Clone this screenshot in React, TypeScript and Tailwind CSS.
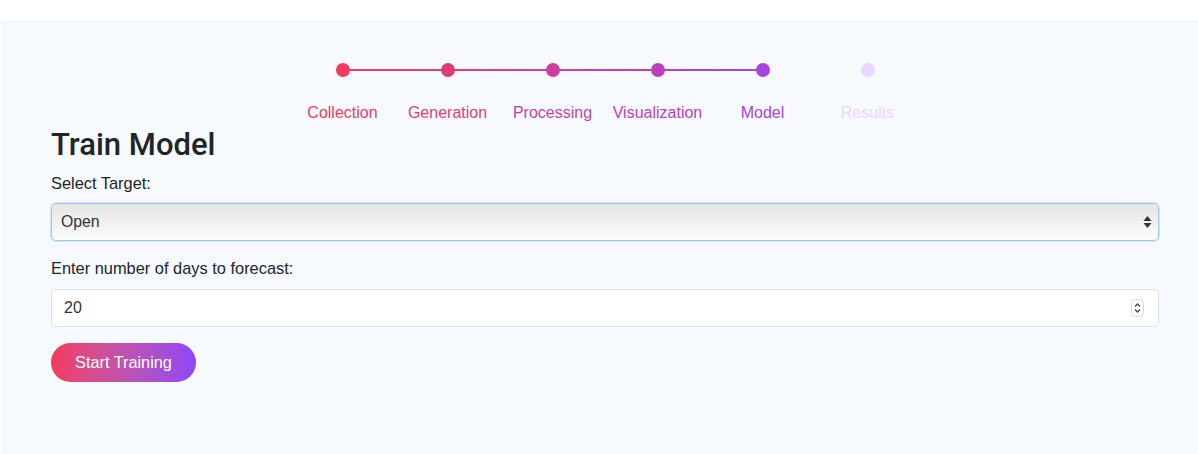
import React from "react";

const steps = [
  { label: "Collection", color: "#f23b5f" },
  { label: "Generation", color: "#df3d7a" },
  { label: "Processing", color: "#cc3fa0" },
  { label: "Visualization", color: "#b842bb" },
  { label: "Model", color: "#a443dd" },
  { label: "Results", color: "#ead6fd" },
];

export default function App() {
  return (
    <div className="min-h-[454px] bg-white pt-[20px]" style={{ fontFamily: '"Liberation Sans", Arial, sans-serif' }}>
      <div className="ml-[1px] min-h-[434px] bg-[#f6f9fd] pl-[50px] pr-[39px] pb-[40px]">
        <div className="flex justify-center pt-[43px]">
          {steps.map((s, i) => (
            <div key={s.label} className="relative flex w-[105px] flex-col items-center">
              {i < 4 && (
                <div
                  className="absolute left-1/2 top-[6px] h-[2px] w-[105px]"
                  style={{ background: `linear-gradient(to right, ${s.color}, ${steps[i + 1].color})` }}
                />
              )}
              <div className="relative z-10 h-[14px] w-[14px] rounded-full" style={{ backgroundColor: s.color }} />
              <div className="mt-[24px] text-[16px] leading-[24px] whitespace-nowrap" style={{ color: s.color }}>
                {s.label}
              </div>
            </div>
          ))}
        </div>
        <h1
          className="mt-[3px] text-[31px] font-medium leading-[34px] text-[#212529]"
          style={{ fontFamily: 'Roboto, "Liberation Sans", sans-serif' }}
        >
          Train Model
        </h1>
        <div className="mt-[10px] text-[16.4px] leading-[22px] text-[#212529]">Select Target:</div>
        <div className="mt-[9px] flex h-[38px] items-center justify-between rounded-[5px] border border-[#9fc6f3] bg-gradient-to-b from-[#e6e6e6] via-[#f0f0f0] to-[#fdfdfd] pl-[9px] pr-[6px] shadow-[0_0_0_1px_rgba(159,198,243,0.35)]">
          <span className="text-[15.8px] text-[#333]">Open</span>
          <svg width="9" height="16" viewBox="0 0 9 16">
            <path d="M4.5 2 L8.5 7 L0.5 7 Z" fill="#333" />
            <path d="M4.5 14 L8.5 9 L0.5 9 Z" fill="#333" />
          </svg>
        </div>
        <div className="mt-[16px] text-[16.4px] leading-[22px] text-[#212529]">Enter number of days to forecast:</div>
        <div className="mt-[10px] flex h-[38px] items-center justify-between rounded-[5px] border border-[#dee2e6] bg-white pl-[12px] pr-[14px]">
          <span className="text-[16px] text-[#333]">20</span>
          <svg width="13" height="18" viewBox="0 0 13 18">
            <rect x="0.5" y="0.5" width="12" height="17" rx="4" fill="#fff" stroke="#d8d8d8" />
            <path d="M4 7.5 L6.5 5 L9 7.5" fill="none" stroke="#444" strokeWidth="1.3" />
            <path d="M4 10.5 L6.5 13 L9 10.5" fill="none" stroke="#444" strokeWidth="1.3" />
          </svg>
        </div>
        <button className="mt-[16px] h-[39px] w-[145px] rounded-full bg-gradient-to-r from-[#f43a5c] to-[#8f45f6] text-[16.3px] text-white">
          Start Training
        </button>
      </div>
    </div>
  );
}
